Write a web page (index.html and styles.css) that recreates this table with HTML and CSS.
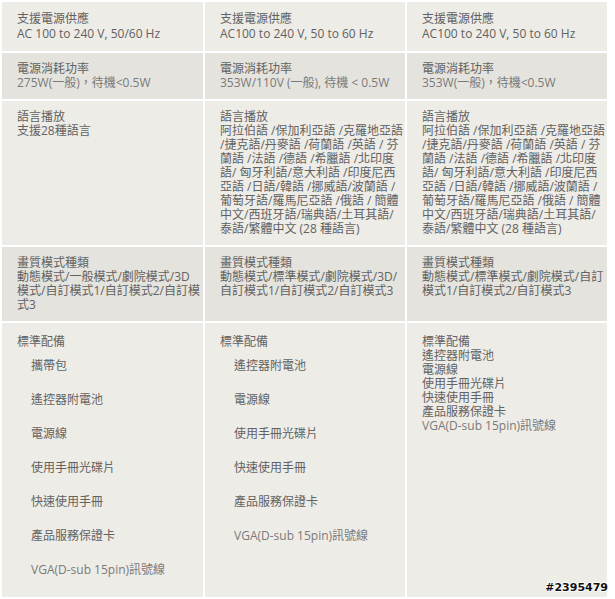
FILE: index.html
```html
<!DOCTYPE html>
<html lang="zh-Hant">
<head>
<meta charset="utf-8">
<title>規格比較</title>
<link rel="stylesheet" href="styles.css">
</head>
<body>
<table class="spec">
  <colgroup><col class="c1"><col class="c2"><col class="c3"></colgroup>
  <tr class="light first">
    <td>支援電源供應<br>AC 100 to 240 V, 50/60 Hz</td>
    <td>支援電源供應<br>AC100 to 240 V, 50 to 60 Hz</td>
    <td>支援電源供應<br>AC100 to 240 V, 50 to 60 Hz</td>
  </tr>
  <tr class="dark">
    <td>電源消耗功率<br><span class="soft">275W(一般)，待機&lt;0.5W</span></td>
    <td>電源消耗功率<br><span class="soft">353W/110V (一般), 待機 &lt; 0.5W</span></td>
    <td>電源消耗功率<br><span class="soft">353W(一般)，待機&lt;0.5W</span></td>
  </tr>
  <tr class="light">
    <td>語言播放<br>支援28種語言</td>
    <td>語言播放<br><span class="ln">阿拉伯語 /保加利亞語 /克羅地亞語</span><br><span class="ln">/捷克語/丹麥語 /荷蘭語 /英語 / 芬</span><br><span class="ln">蘭語 /法語 /德語 /希臘語 /北印度</span><br><span class="ln">語/ 匈牙利語/意大利語 /印度尼西</span><br><span class="ln">亞語 /日語/韓語 /挪威語/波蘭語 /</span><br><span class="ln">葡萄牙語/羅馬尼亞語 /俄語 / 簡體</span><br><span class="ln">中文/西班牙語/瑞典語/土耳其語/</span><br><span class="ln">泰語/繁體中文 (28 種語言)</span></td>
    <td>語言播放<br><span class="ln">阿拉伯語 /保加利亞語 /克羅地亞語</span><br><span class="ln">/捷克語/丹麥語 /荷蘭語 /英語 / 芬</span><br><span class="ln">蘭語 /法語 /德語 /希臘語 /北印度</span><br><span class="ln">語/ 匈牙利語/意大利語 /印度尼西</span><br><span class="ln">亞語 /日語/韓語 /挪威語/波蘭語 /</span><br><span class="ln">葡萄牙語/羅馬尼亞語 /俄語 / 簡體</span><br><span class="ln">中文/西班牙語/瑞典語/土耳其語/</span><br><span class="ln">泰語/繁體中文 (28 種語言)</span></td>
  </tr>
  <tr class="dark">
    <td>畫質模式種類<br><span class="ln">動態模式/一般模式/劇院模式/3D</span><br><span class="ln">模式/自訂模式1/自訂模式2/自訂模</span><br>式3</td>
    <td>畫質模式種類<br>動態模式/標準模式/劇院模式/3D/自訂模式1/自訂模式2/自訂模式3</td>
    <td>畫質模式種類<br>動態模式/標準模式/劇院模式/自訂模式1/自訂模式2/自訂模式3</td>
  </tr>
  <tr class="light last">
    <td>標準配備
      <ul class="items">
        <li>攜帶包</li>
        <li>遙控器附電池</li>
        <li>電源線</li>
        <li>使用手冊光碟片</li>
        <li>快速使用手冊</li>
        <li>產品服務保證卡</li>
        <li class="soft">VGA(D-sub 15pin)訊號線</li>
      </ul>
    </td>
    <td>標準配備
      <ul class="items">
        <li>遙控器附電池</li>
        <li>電源線</li>
        <li>使用手冊光碟片</li>
        <li>快速使用手冊</li>
        <li>產品服務保證卡</li>
        <li class="soft">VGA(D-sub 15pin)訊號線</li>
      </ul>
    </td>
    <td>標準配備<br>遙控器附電池<br>電源線<br>使用手冊光碟片<br>快速使用手冊<br>產品服務保證卡<br><span class="soft">VGA(D-sub 15pin)訊號線</span>
      <span class="mark">#2395479</span>
    </td>
  </tr>
</table>
</body>
</html>
```

FILE: styles.css
```css
html, body {
  margin: 0;
  padding: 0;
  background: #ffffff;
}

body {
  font-family: "Open Sans", "Noto Sans CJK TC", sans-serif;
  font-size: 12px;
  line-height: 14px;
  color: #626262;
}

.spec {
  border-collapse: separate;
  border-spacing: 2px;
  table-layout: fixed;
  width: 609px;
}

.c1 { width: 201px; }
.c2 { width: 200px; }
.c3 { width: 200px; }

.spec td {
  vertical-align: top;
  padding: 9px 0 9px 15px;
}

.first td {
  line-height: 15px;
  padding-bottom: 10px;
}

.light td { background: #eeece7; }
.dark td { background: #e5e3dd; }

.last td {
  padding-top: 12px;
  padding-bottom: 10px;
  position: relative;
}

.ln { white-space: nowrap; }

.soft { color: #7a7a7a; }

.items {
  list-style: none;
  margin: 0;
  padding: 0 0 0 14px;
}

.items li {
  padding: 10px 0;
}

.mark {
  position: absolute;
  right: -1px;
  bottom: 3px;
  font-family: "DejaVu Sans", sans-serif;
  font-weight: bold;
  font-size: 11px;
  line-height: 12px;
  color: #111;
  text-shadow: 1px 0 0 #fff, -1px 0 0 #fff, 0 1px 0 #fff, 0 -1px 0 #fff;
}
```
